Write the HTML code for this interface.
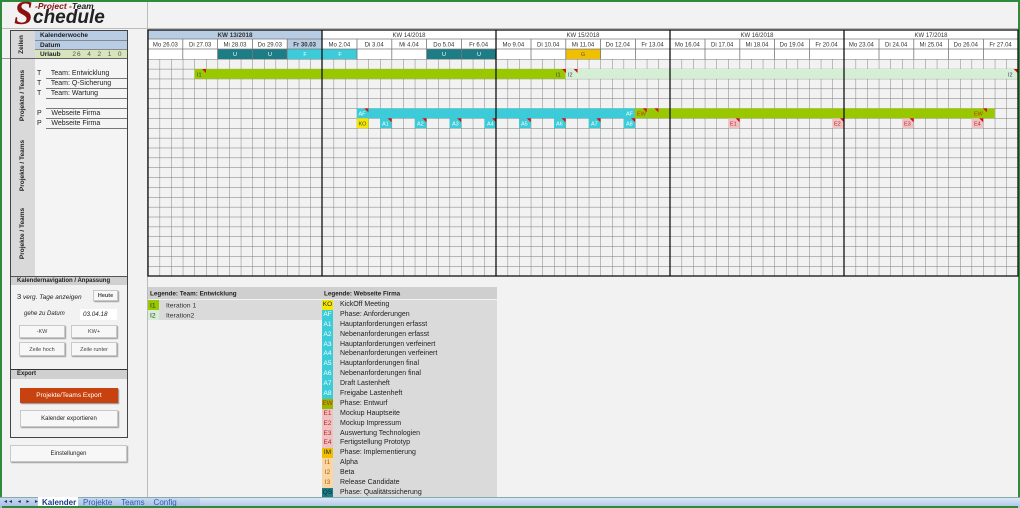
<!DOCTYPE html>
<html><head><meta charset="utf-8"><style>
*{margin:0;padding:0;box-sizing:border-box}
body{width:1020px;height:508px;overflow:hidden;background:#f2f2f2;font-family:"Liberation Sans",sans-serif;position:relative;font-size:7px;color:#222}
.a{position:absolute}
.btn{position:absolute;background:#f7f7f7;border:1px solid #c8c8c8;box-shadow:1px 1px 1px #999;font-size:5.5px;text-align:center;color:#444}
.vt{position:absolute;transform:rotate(-90deg);font-weight:bold;font-size:6.5px;white-space:nowrap}
.lg{position:relative;width:175px;height:9.9px;font-size:7px;line-height:9.9px;background:#dadada}
.lg b{display:inline-block;width:11px;height:9.9px;font-weight:normal;text-align:center;margin-right:7px;font-size:6.5px}
</style></head><body>
<!-- green frame -->
<div class="a" style="left:0;top:0;width:1020px;height:508px;border:2px solid #2f8a3c;border-bottom:none"></div>
<!-- logo -->
<div class="a" style="left:14px;top:-1px;font-family:'Liberation Serif',serif;font-weight:bold;font-size:34px;color:#8b1010;font-style:italic;line-height:30px">S</div>
<div class="a" style="left:35px;top:2px;font-weight:bold;font-style:italic;font-size:8.5px;color:#8b1010;line-height:9px">-Project -<span style="color:#222">Team</span></div>
<div class="a" style="left:33px;top:8px;font-weight:bold;font-style:italic;font-size:19px;color:#222;line-height:19px">chedule</div>
<div class="a" style="left:2px;top:28px;width:1016px;height:1px;background:#bbb"></div>
<div class="a" style="left:147px;top:2px;width:1px;height:495px;background:#bbb"></div>
<div class="a" style="left:2px;top:58px;width:8px;height:1px;background:#999"></div>

<!-- left panel -->
<div class="a" style="left:10px;top:30px;width:118px;height:408px;border:1px solid #444;background:#f2f2f2"></div>
<div class="a" style="left:11px;top:31px;width:24px;height:245px;background:#d9d9d9"></div>
<div class="a" style="left:35px;top:31px;width:92px;height:9px;background:#b8cce4;font-weight:bold;font-size:6.5px;padding-left:5px;line-height:9px">Kalenderwoche</div>
<div class="a" style="left:35px;top:40px;width:92px;height:9px;background:#b8cce4;font-weight:bold;font-size:6.5px;padding-left:5px;line-height:9px;border-top:1px solid #888">Datum</div>
<div class="a" style="left:35px;top:49px;width:92px;height:10px;background:#d8e4bc;font-weight:bold;font-size:6.5px;padding-left:5px;line-height:10px;border-top:1px solid #888">Urlaub <span style="font-weight:normal;color:#555;margin-left:10px;letter-spacing:1px">26 &nbsp;4 &nbsp;2 &nbsp;1 &nbsp;0</span></div>
<div class="a" style="left:11px;top:58px;width:116px;height:1px;background:#666"></div>
<div class="vt" style="left:12px;top:41px">Zeilen</div>
<div class="vt" style="left:-3px;top:92px">Projekte / Teams</div>
<div class="vt" style="left:-3px;top:162px">Projekte / Teams</div>
<div class="vt" style="left:-3px;top:230px">Projekte / Teams</div>
<div class="a" style="left:35px;top:59px;width:92px;height:217px;background:#f4f4f4"></div>
<div class="a" style="left:37px;top:69px;font-size:7px;line-height:10px">T&nbsp;&nbsp;&nbsp;&nbsp; Team: Entwicklung<br>T&nbsp;&nbsp;&nbsp;&nbsp; Team: Q-Sicherung<br>T&nbsp;&nbsp;&nbsp;&nbsp; Team: Wartung<br><br>P&nbsp;&nbsp;&nbsp;&nbsp; Webseite Firma<br>P&nbsp;&nbsp;&nbsp;&nbsp; Webseite Firma</div>
<div class="a" style="left:46px;top:78px;width:81px;height:1px;background:#777"></div>
<div class="a" style="left:46px;top:88px;width:81px;height:1px;background:#777"></div>
<div class="a" style="left:46px;top:98px;width:81px;height:1px;background:#777"></div>
<div class="a" style="left:46px;top:108px;width:81px;height:1px;background:#777"></div>
<div class="a" style="left:46px;top:118px;width:81px;height:1px;background:#777"></div>
<div class="a" style="left:46px;top:128px;width:81px;height:1px;background:#777"></div>
<div class="a" style="left:11px;top:276px;width:116px;height:9px;background:#d0d0d0;border-top:1px solid #555;font-weight:bold;font-size:6px;padding-left:6px;line-height:8px">Kalendernavigation / Anpassung</div>
<div class="a" style="left:17px;top:292px;font-size:6.5px"><span style="font-size:7.5px">3</span> <i>verg. Tage anzeigen</i></div>
<div class="btn" style="left:93px;top:290px;width:25px;height:11px;line-height:10px;font-weight:bold">Heute</div>
<div class="a" style="left:24px;top:311px;font-size:6px"><i>gehe zu Datum</i></div>
<div class="a" style="left:80px;top:309px;width:37px;height:11px;background:#fff;font-size:6.3px;line-height:11px;padding-left:3px"><i>03.04.18</i></div>
<div class="btn" style="left:19px;top:325px;width:46px;height:13px;line-height:13px">-KW</div>
<div class="btn" style="left:71px;top:325px;width:46px;height:13px;line-height:13px">KW+</div>
<div class="btn" style="left:19px;top:342px;width:46px;height:14px;line-height:14px">Zeile hoch</div>
<div class="btn" style="left:71px;top:342px;width:46px;height:14px;line-height:14px">Zeile runter</div>
<div class="a" style="left:11px;top:369px;width:116px;height:1px;background:#333"></div>
<div class="a" style="left:11px;top:370px;width:116px;height:9px;background:#d0d0d0;font-weight:bold;font-size:6px;padding-left:6px;line-height:9px">Export</div>
<div class="a" style="left:20px;top:388px;width:98px;height:15px;background:#c8420f;color:#fff;font-size:6.5px;text-align:center;line-height:15px;box-shadow:1px 1px 1px #888">Projekte/Teams Export</div>
<div class="btn" style="left:20px;top:410px;width:98px;height:17px;line-height:17px;font-size:6px;color:#222">Kalender exportieren</div>
<div class="btn" style="left:10px;top:445px;width:117px;height:17px;line-height:17px;font-size:6px;color:#222">Einstellungen</div>

<!-- calendar -->
<svg class="a" style="left:0;top:0" width="1020" height="508" font-family="Liberation Sans, sans-serif">
<defs>
<pattern id="g" x="148" y="59" width="11.6" height="9.86" patternUnits="userSpaceOnUse">
<path d="M0 0V9.86M0 0H11.6" stroke="#777" stroke-width="0.9" fill="none"/>
</pattern>
</defs>
<rect x="148" y="30" width="870" height="29" fill="#fff"/>
<rect x="148" y="30" width="174" height="9" fill="#b8cce4"/>
<rect x="287" y="39" width="35" height="10" fill="#b8cce4"/>
<g font-size="6" fill="#333" text-anchor="middle">
<text x="235" y="37" font-weight="bold" font-size="6.3">KW 13/2018</text>
<text x="409" y="37">KW 14/2018</text>
<text x="583" y="37">KW 15/2018</text>
<text x="757" y="37">KW 16/2018</text>
<text x="931" y="37">KW 17/2018</text>
<text x="165.4" y="46.5">Mo 26.03</text><text x="200.2" y="46.5">Di 27.03</text><text x="235" y="46.5">Mi 28.03</text><text x="269.8" y="46.5">Do 29.03</text><text x="304.6" y="46.5" font-weight="bold">Fr 30.03</text>
<text x="339.4" y="46.5">Mo 2.04</text><text x="374.2" y="46.5">Di 3.04</text><text x="409" y="46.5">Mi 4.04</text><text x="443.8" y="46.5">Do 5.04</text><text x="478.6" y="46.5">Fr 6.04</text>
<text x="513.4" y="46.5">Mo 9.04</text><text x="548.2" y="46.5">Di 10.04</text><text x="583" y="46.5">Mi 11.04</text><text x="617.8" y="46.5">Do 12.04</text><text x="652.6" y="46.5">Fr 13.04</text>
<text x="687.4" y="46.5">Mo 16.04</text><text x="722.2" y="46.5">Di 17.04</text><text x="757" y="46.5">Mi 18.04</text><text x="791.8" y="46.5">Do 19.04</text><text x="826.6" y="46.5">Fr 20.04</text>
<text x="861.4" y="46.5">Mo 23.04</text><text x="896.2" y="46.5">Di 24.04</text><text x="931" y="46.5">Mi 25.04</text><text x="965.8" y="46.5">Do 26.04</text><text x="1000.6" y="46.5">Fr 27.04</text>
</g>
<rect x="218" y="49" width="69.6" height="10" fill="#1d7d86"/>
<rect x="287.6" y="49" width="69.6" height="10" fill="#3ccbd8"/>
<rect x="427" y="49" width="69.6" height="10" fill="#1d7d86"/>
<rect x="566" y="49" width="34.8" height="10" fill="#f0c000"/>
<g font-size="5.5" fill="#fff" text-anchor="middle"><text x="235" y="56">U</text><text x="270" y="56">U</text><text x="305" y="56">F</text><text x="340" y="56">F</text><text x="444" y="56">U</text><text x="479" y="56">U</text><text x="583" y="56" fill="#555">G</text></g>
<g stroke="#777" stroke-width="0.8">
<line x1="148" y1="39" x2="1018" y2="39"/><line x1="148" y1="49" x2="1018" y2="49"/>
<path d="M182.8 39V59M217.6 39V59M252.4 39V59M287.2 39V59M357 39V59M391.8 39V59M426.6 39V59M461.4 39V59M531 39V59M565.8 39V59M600.6 39V59M635.4 39V59M705 39V59M739.8 39V59M774.6 39V59M809.4 39V59M879 39V59M913.8 39V59M948.6 39V59M983.4 39V59"/>
</g>
<rect x="148" y="59" width="870" height="217" fill="url(#g)"/>
<rect x="194.4" y="69" width="371.2" height="9.86" fill="#99c800"/>
<rect x="565.6" y="69" width="452" height="9.86" fill="#d5efd5"/>
<rect x="356.8" y="108.4" width="290" height="9.86" fill="#3ccbd8"/>
<rect x="646.8" y="108.4" width="348" height="9.86" fill="#99c800"/>
<rect x="634.8" y="108.4" width="11.6" height="9.86" fill="#99c800"/>
<g font-size="5.5" fill="#fff">
<rect x="356.8" y="118.3" width="11.6" height="9.86" fill="#f5e800"/><text x="358.5" y="125.5" fill="#444">KO</text>
<rect x="380" y="118.3" width="11.6" height="9.86" fill="#3ccbd8"/><text x="382" y="125.5">A1</text>
<rect x="414.8" y="118.3" width="11.6" height="9.86" fill="#3ccbd8"/><text x="417" y="125.5">A2</text>
<rect x="449.6" y="118.3" width="11.6" height="9.86" fill="#3ccbd8"/><text x="452" y="125.5">A3</text>
<rect x="484.4" y="118.3" width="11.6" height="9.86" fill="#3ccbd8"/><text x="487" y="125.5">A4</text>
<rect x="519.2" y="118.3" width="11.6" height="9.86" fill="#3ccbd8"/><text x="521" y="125.5">A5</text>
<rect x="554" y="118.3" width="11.6" height="9.86" fill="#3ccbd8"/><text x="556" y="125.5">A6</text>
<rect x="588.8" y="118.3" width="11.6" height="9.86" fill="#3ccbd8"/><text x="591" y="125.5">A7</text>
<rect x="623.6" y="118.3" width="11.6" height="9.86" fill="#3ccbd8"/><text x="626" y="125.5">A8</text>
<rect x="728" y="118.3" width="11.6" height="9.86" fill="#efc3c3"/><text x="730" y="125.5" fill="#c02020">E1</text>
<rect x="832.4" y="118.3" width="11.6" height="9.86" fill="#efc3c3"/><text x="834" y="125.5" fill="#c02020">E2</text>
<rect x="902" y="118.3" width="11.6" height="9.86" fill="#efc3c3"/><text x="904" y="125.5" fill="#c02020">E3</text>
<rect x="971.6" y="118.3" width="11.6" height="9.86" fill="#efc3c3"/><text x="974" y="125.5" fill="#c02020">E4</text>
<text x="358.5" y="115.5">AF</text><text x="626" y="115.5">AF</text>
<text x="637" y="115.5" fill="#c03000">EW</text><text x="974" y="115.5" fill="#c03000">EW</text>
<text x="556" y="76.5" fill="#336">I1</text><text x="568" y="76.5" fill="#336">I2</text><text x="1008" y="76.5" fill="#336">I2</text><text x="197" y="76.5" fill="#336">I1</text>
</g>
<g fill="#d01010">
<path d="M202 69h4v4z"/><path d="M562 69h4v4z"/><path d="M573.6 69h4v4z"/><path d="M1013.6 69h4v4z"/>
<path d="M364.4 108.4h4v4z"/><path d="M642.8 108.4h4v4z"/><path d="M654.4 108.4h4v4z"/><path d="M983 108.4h4v4z"/>
<path d="M387.6 118.3h4v4z"/><path d="M422.4 118.3h4v4z"/><path d="M457.2 118.3h4v4z"/><path d="M492 118.3h4v4z"/><path d="M526.8 118.3h4v4z"/><path d="M561.6 118.3h4v4z"/><path d="M596.4 118.3h4v4z"/><path d="M631.2 118.3h4v4z"/><path d="M735.6 118.3h4v4z"/><path d="M840 118.3h4v4z"/><path d="M909.6 118.3h4v4z"/><path d="M979.2 118.3h4v4z"/>
</g>
<g stroke="#111" stroke-width="1.3" fill="none">
<rect x="148" y="30" width="870" height="246"/>
<path d="M322 30V276M496 30V276M670 30V276M844 30V276"/>
</g>
<rect x="148" y="287" width="349" height="12" fill="#cfcfcf"/>
<text x="150" y="295.5" font-size="6.3" font-weight="bold" fill="#222">Legende: Team: Entwicklung</text>
<text x="324" y="295.5" font-size="6.3" font-weight="bold" fill="#222">Legende: Webseite Firma</text>
<rect x="148" y="300" width="174" height="20" fill="#dadada"/>
<rect x="148" y="300" width="11" height="10" fill="#99c800"/>
<rect x="148" y="310" width="11" height="10" fill="#d5efd5"/>
<g font-size="6.8" fill="#333"><text x="150" y="307.5">I1</text><text x="150" y="317.5">I2</text><text x="166" y="307.5">Iteration 1</text><text x="166" y="317.5">Iteration2</text></g>
</svg>
<div class="a" style="left:322px;top:300px">
<div class="lg"><b style="background:#f5e800">KO</b>KickOff Meeting</div>
<div class="lg"><b style="background:#3ccbd8;color:#fff">AF</b>Phase: Anforderungen</div>
<div class="lg"><b style="background:#3ccbd8;color:#fff">A1</b>Hauptanforderungen erfasst</div>
<div class="lg"><b style="background:#3ccbd8;color:#fff">A2</b>Nebenanforderungen erfasst</div>
<div class="lg"><b style="background:#3ccbd8;color:#fff">A3</b>Hauptanforderungen verfeinert</div>
<div class="lg"><b style="background:#3ccbd8;color:#fff">A4</b>Nebenanforderungen verfeinert</div>
<div class="lg"><b style="background:#3ccbd8;color:#fff">A5</b>Hauptanforderungen final</div>
<div class="lg"><b style="background:#3ccbd8;color:#fff">A6</b>Nebenanforderungen final</div>
<div class="lg"><b style="background:#3ccbd8;color:#fff">A7</b>Draft Lastenheft</div>
<div class="lg"><b style="background:#3ccbd8;color:#fff">A8</b>Freigabe Lastenheft</div>
<div class="lg"><b style="background:#99b800;color:#c03000">EW</b>Phase: Entwurf</div>
<div class="lg"><b style="background:#efc3c3;color:#c02020">E1</b>Mockup Hauptseite</div>
<div class="lg"><b style="background:#efc3c3;color:#c02020">E2</b>Mockup Impressum</div>
<div class="lg"><b style="background:#efc3c3;color:#c02020">E3</b>Auswertung Technologien</div>
<div class="lg"><b style="background:#efc3c3;color:#c02020">E4</b>Fertigstellung Prototyp</div>
<div class="lg"><b style="background:#f0c000">IM</b>Phase: Implementierung</div>
<div class="lg"><b style="background:#fad5a5;color:#b06000">I1</b>Alpha</div>
<div class="lg"><b style="background:#fad5a5;color:#b06000">I2</b>Beta</div>
<div class="lg"><b style="background:#fad5a5;color:#b06000">I3</b>Release Candidate</div>
<div class="lg"><b style="background:#1d7d86;color:#123">QS</b>Phase: Qualitätssicherung</div>
</div>
<!-- tab bar -->
<div class="a" style="left:0;top:497px;width:1020px;height:11px;background:linear-gradient(#c9daf0,#9fbbe2);border-top:1px solid #8aa"></div>
<div class="a" style="left:200px;top:498px;width:820px;height:10px;background:linear-gradient(#dde8f6,#a8c2e6)"></div>
<div class="a" style="left:4px;top:498px;font-size:6px;color:#335;letter-spacing:2px">◂◂ ◂ ▸ ▸▸</div>
<div class="a" style="left:38px;top:497px;width:40px;height:11px;background:#fff"></div>
<div class="a" style="left:42px;top:498px;font-size:8px;font-weight:bold;color:#1a3a8a">Kalender</div>
<div class="a" style="left:83px;top:498px;font-size:8px;color:#2a5ab8">Projekte&nbsp;&nbsp;&nbsp; Teams&nbsp;&nbsp;&nbsp; Config</div>
<div class="a" style="left:2px;top:506px;width:1016px;height:2px;background:#2f8a3c"></div>
</body></html>
